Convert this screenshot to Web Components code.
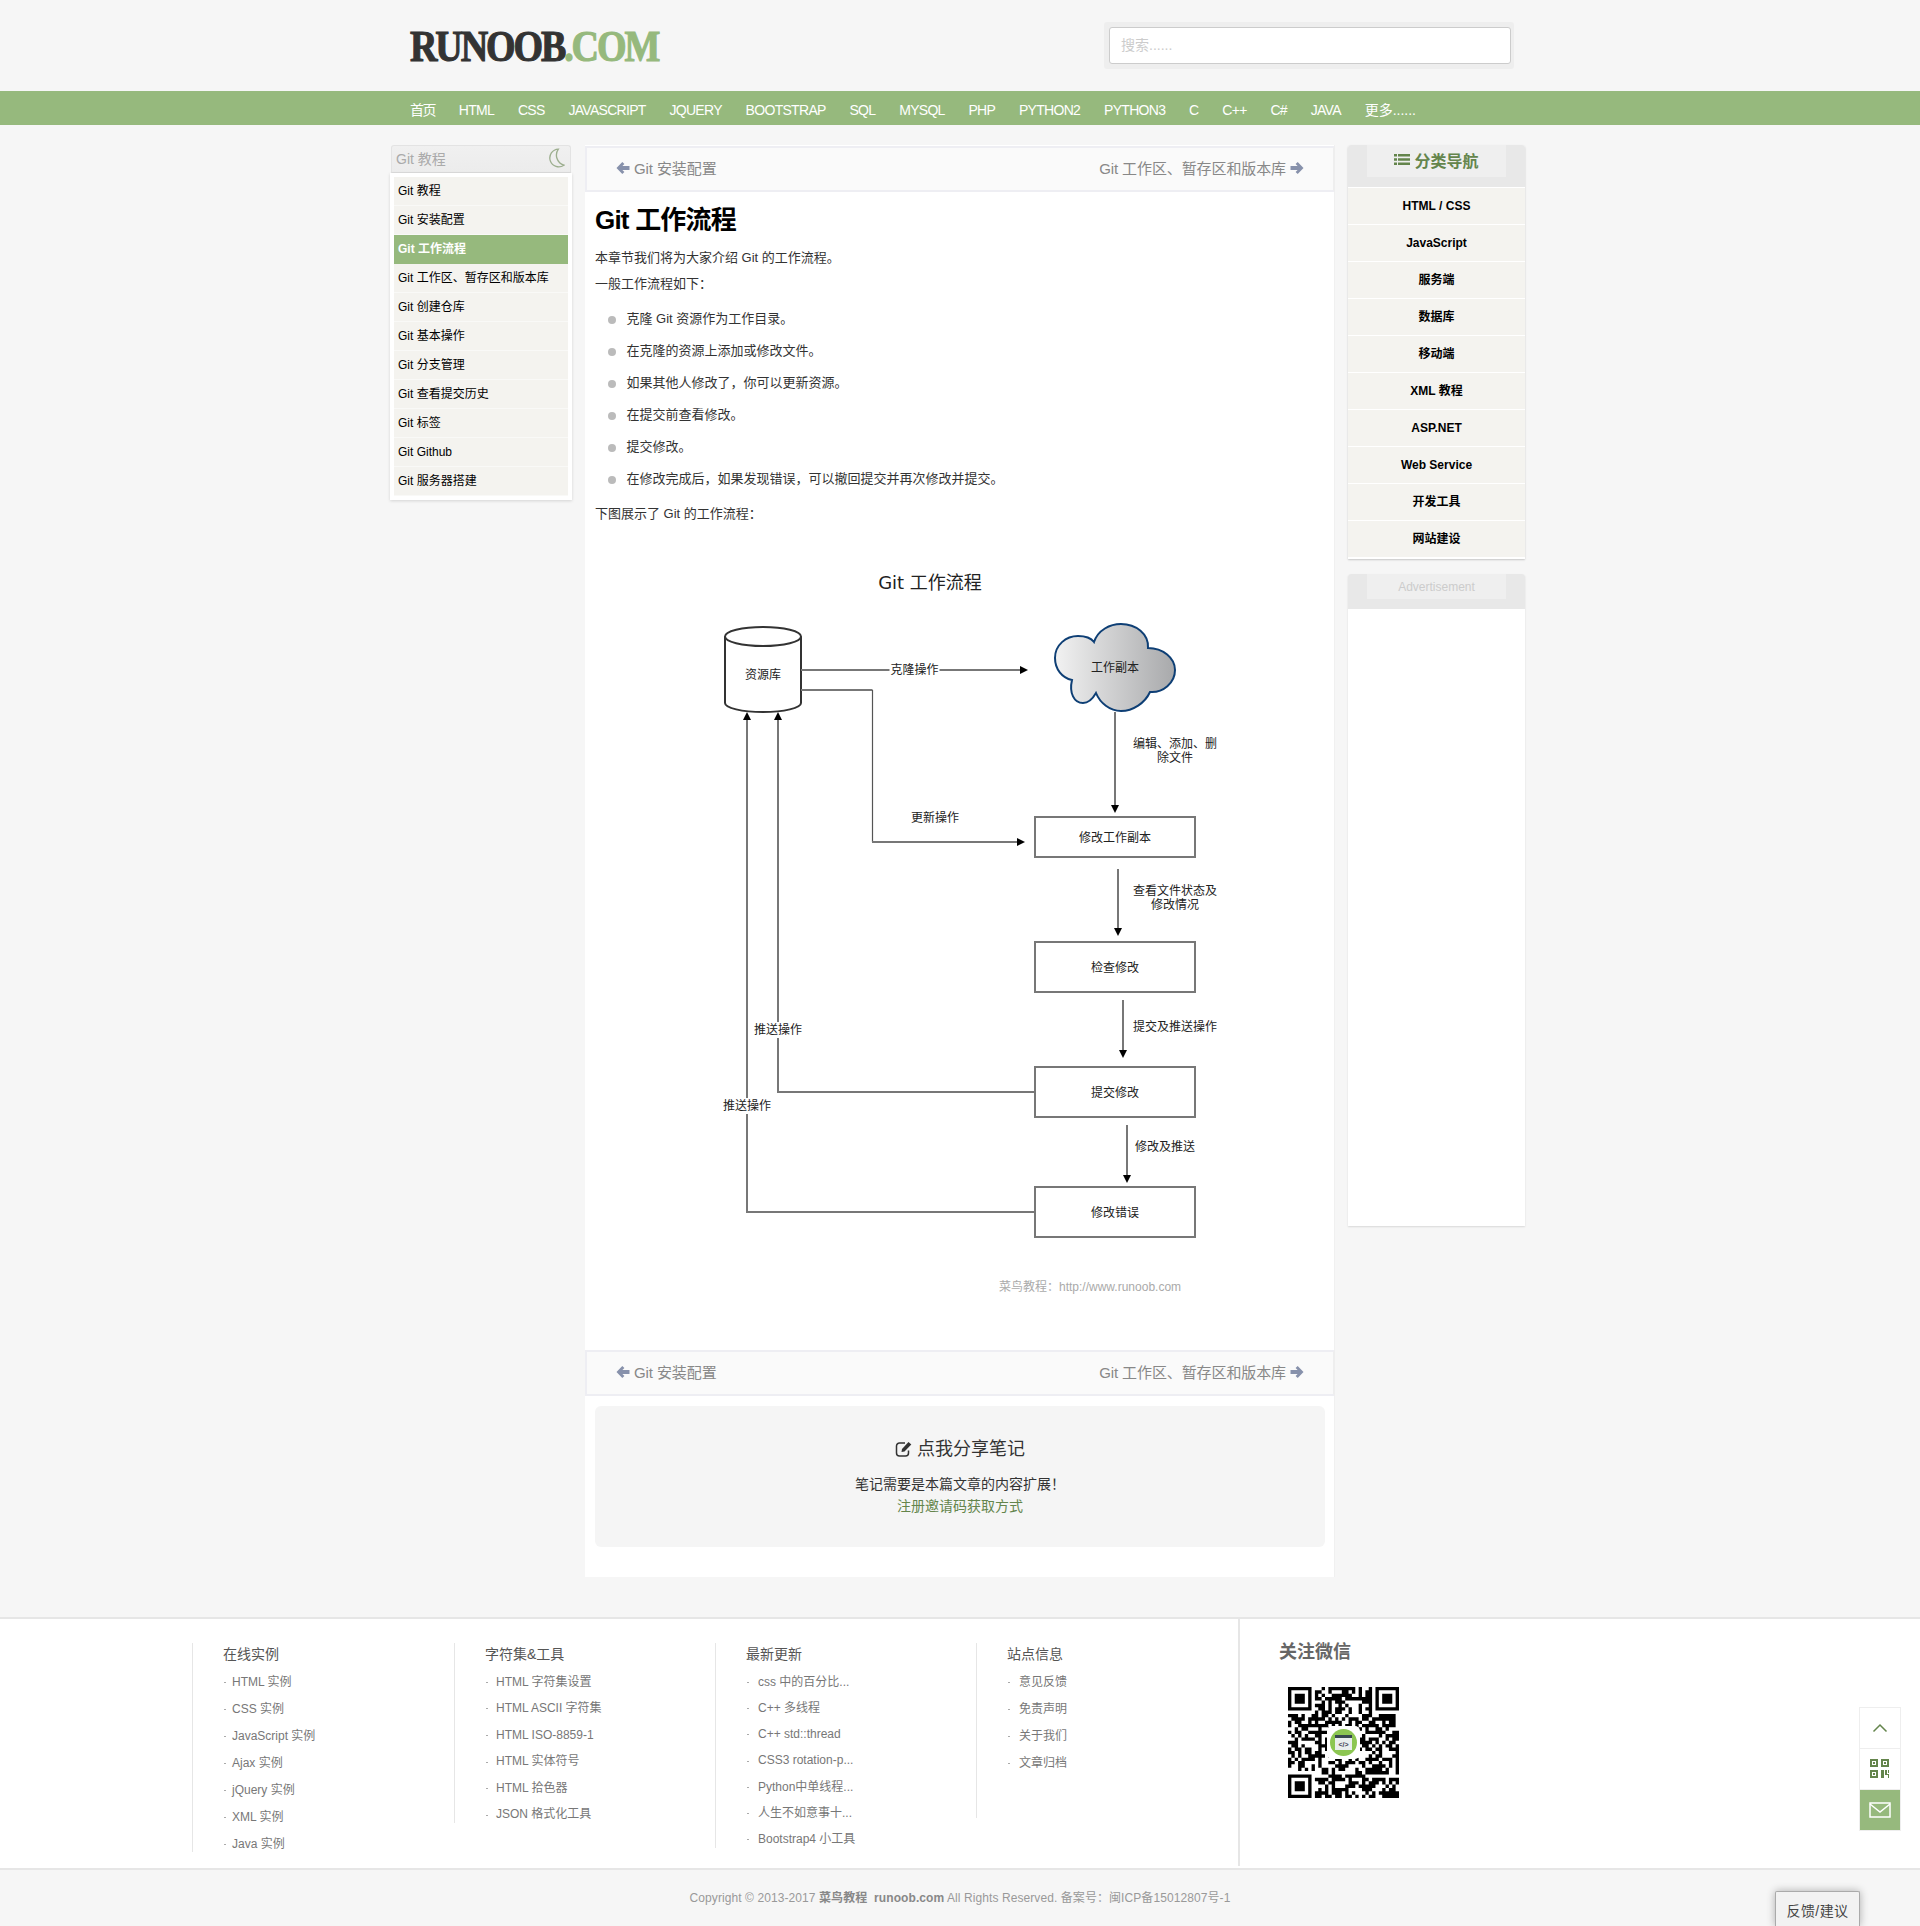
<!DOCTYPE html>
<html lang="zh">
<head>
<meta charset="utf-8">
<title>Git 工作流程 | 菜鸟教程</title>
<style>
  html,body{margin:0;padding:0}
  body{
    background:#f6f6f6;
    color:#333;
    font-family:"Liberation Sans","Noto Sans CJK SC",sans-serif;
    font-size:12px;
    height:1926px;
    overflow:hidden;
    position:relative;
  }
  .main{
    display:grid;
    grid-template-columns:182px 750px 177px;
    column-gap:13px;
    align-items:start;
    padding:20px 0 40px 390px;
  }
  .right{display:flex;flex-direction:column;gap:15px}
</style>
</head>
<body>
<site-header></site-header>
<div class="main">
  <side-menu heading="Git 教程">
    <a>Git 教程</a>
    <a>Git 安装配置</a>
    <a class="active">Git 工作流程</a>
    <a>Git 工作区、暂存区和版本库</a>
    <a>Git 创建仓库</a>
    <a>Git 基本操作</a>
    <a>Git 分支管理</a>
    <a>Git 查看提交历史</a>
    <a>Git 标签</a>
    <a>Git Github</a>
    <a>Git 服务器搭建</a>
  </side-menu>
  <tutorial-article></tutorial-article>
  <div class="right">
    <cate-nav>
      <a>HTML / CSS</a><a>JavaScript</a><a>服务端</a><a>数据库</a><a>移动端</a>
      <a>XML 教程</a><a>ASP.NET</a><a>Web Service</a><a>开发工具</a><a>网站建设</a>
    </cate-nav>
    <ad-box></ad-box>
  </div>
</div>
<site-footer>
  <footer-col heading="在线实例" width="262" line="209" row="27" indent="9">
    <a>HTML 实例</a><a>CSS 实例</a><a>JavaScript 实例</a><a>Ajax 实例</a><a>jQuery 实例</a><a>XML 实例</a><a>Java 实例</a>
  </footer-col>
  <footer-col heading="字符集&amp;工具" width="261" line="180" row="26.6" indent="11">
    <a>HTML 字符集设置</a><a>HTML ASCII 字符集</a><a>HTML ISO-8859-1</a><a>HTML 实体符号</a><a>HTML 拾色器</a><a>JSON 格式化工具</a>
  </footer-col>
  <footer-col heading="最新更新" width="261" line="205" row="26.3" indent="12">
    <a>css 中的百分比...</a><a>C++ 多线程</a><a>C++ std::thread</a><a>CSS3 rotation-p...</a><a>Python中单线程...</a><a>人生不如意事十...</a><a>Bootstrap4 小工具</a>
  </footer-col>
  <footer-col heading="站点信息" width="262" line="175" row="27" indent="12">
    <a>意见反馈</a><a>免责声明</a><a>关于我们</a><a>文章归档</a>
  </footer-col>
</site-footer>
<float-tools></float-tools>

<script>
const GREEN = '#96b97d';
const DARK_GREEN = '#64854c';

const ARROW_LEFT = '<svg viewBox="0 0 14 14" width="14" height="14"><path d="M.5 7 6.300 1 8.400 3.100 6.400 5H13.500V9H6.400L8.400 10.900 6.300 13z" fill="#8791ab"/></svg>';
const ARROW_RIGHT = '<svg viewBox="0 0 14 14" width="14" height="14"><path d="M13.500 7 7.700 1 5.600 3.100 7.600 5H.5V9H7.600L5.600 10.900 7.700 13z" fill="#8791ab"/></svg>';

class SiteHeader extends HTMLElement {
  constructor() {
    super();
    this.attachShadow({ mode: 'open' });
    const items = ['首页','HTML','CSS','JAVASCRIPT','JQUERY','BOOTSTRAP','SQL','MYSQL','PHP','PYTHON2','PYTHON3','C','C++','C#','JAVA','更多......'];
    this.shadowRoot.innerHTML = `
      <style>
        :host{display:block}
        .top{
          height:91px;
          display:flex;
          align-items:center;
          justify-content:space-between;
          padding:0 406px 0 410px;
          box-sizing:border-box;
        }
        .logo{
          font-family:"Liberation Serif",serif;
          font-weight:700;
          font-size:38px;
          letter-spacing:-2.100px;
          line-height:46px;
          color:#333;
          -webkit-text-stroke:1px currentColor;
          transform:scaleY(1.16);
          transform-origin:left center;
          margin-top:1px;
        }
        .logo span{color:${GREEN}}
        .search{
          width:410px;
          height:47px;
          box-sizing:border-box;
          padding:5px 3px 5px 5px;
          background:#eee;
          border-radius:3px;
        }
        .search div{
          height:37px;
          box-sizing:border-box;
          background:#fff;
          border:1px solid #ccc;
          border-radius:3px;
          padding-left:11px;
          font-size:14px;
          line-height:35px;
          color:#ccc;
        }
        nav{
          height:34px;
          background:${GREEN};
          display:flex;
          gap:23.800px;
          padding-left:410px;
          font-size:14px;
          line-height:38px;
          letter-spacing:-.7px;
          color:#fff;
        }
        nav .home{letter-spacing:-1.500px}
        nav .more{letter-spacing:0}
      </style>
      <div class="top">
        <div class="logo">RUNOOB<span>.COM</span></div>
        <div class="search"><div>搜索......</div></div>
      </div>
      <nav>${items.map((t) => `<span class="${t === '首页' ? 'home' : t.startsWith('更多') ? 'more' : ''}">${t}</span>`).join('')}</nav>
    `;
  }
}
customElements.define('site-header', SiteHeader);

class SideMenu extends HTMLElement {
  constructor() {
    super();
    this.attachShadow({ mode: 'open' });
    this.shadowRoot.innerHTML = `
      <style>
        :host{display:block}
        .head{
          height:28px;
          box-sizing:border-box;
          margin:0 1px;
          border:1px solid #e3e3e3;
          border-bottom-color:#ddd;
          border-radius:3px 3px 0 0;
          background:linear-gradient(#f0f0f0,#ececec);
          display:flex;
          align-items:center;
          justify-content:space-between;
          padding:0 5px 2px 4px;
          font-size:14px;
          color:#aaa;
        }
        .list{
          background:#fff;
          padding:4px 4px 4px;
          box-shadow:0 1px 3px rgba(0,0,0,.14);
          display:flex;
          flex-direction:column;
        }
        ::slotted(a){
          display:block;
          height:29px;
          box-sizing:border-box;
          padding-left:4px;
          line-height:28px;
          color:#000;
          background:#f4f3ef;
          border-bottom:1px solid #f9f9f7;
        }
        ::slotted(a.active){
          background:${GREEN};
          color:#fff;
          font-weight:700;
          border-bottom:0;
        }
      </style>
      <div class="head">
        <span>${this.getAttribute('heading')}</span>
        <svg width="20" height="20" viewBox="0 0 18 18"><path d="M12 1A8 8 0 1 0 17 15.500 9.500 9.500 0 0 1 12 1z" fill="none" stroke="#9cae8e" stroke-width="1.200"/></svg>
      </div>
      <div class="list"><slot></slot></div>
    `;
  }
}
customElements.define('side-menu', SideMenu);

class ArticlePager extends HTMLElement {
  constructor() {
    super();
    this.attachShadow({ mode: 'open' });
    this.shadowRoot.innerHTML = `
      <style>
        :host{
          display:flex;
          height:46px;
          box-sizing:border-box;
          justify-content:space-between;
          align-items:center;
          padding:0 29px 3px 29px;
          background:#fafafa;
          border:2px solid #eeeef3;
          border-right-color:#eee;
          font-size:15px;
          letter-spacing:-.1px;
          color:#888;
        }
        span{display:flex;align-items:center;gap:4px}
      </style>
      <span>${ARROW_LEFT}Git 安装配置</span>
      <span>Git 工作区、暂存区和版本库${ARROW_RIGHT}</span>
    `;
  }
}
customElements.define('article-pager', ArticlePager);

class FlowDiagram extends HTMLElement {
  constructor() {
    super();
    this.attachShadow({ mode: 'open' });
    const box = (y, h, label) => `
      <rect x="1035" y="${y}" width="160" height="${h}" fill="#fff" stroke="#777" stroke-width="2"/>
      <text x="1115" y="${y + h / 2 + 4.700}">${label}</text>`;
    const down = (x, y1, y2) => `
      <path d="M${x} ${y1}V${y2 - 7}" class="line"/>
      <path d="M${x - 4} ${y2 - 8}h8l-4 8z"/>`;
    const label = (x, y, t, w = 50) => `
      <rect x="${x - w / 2}" y="${y - 8}" width="${w}" height="16" fill="#fff"/>
      <text x="${x}" y="${y + 4}">${t}</text>`;
    this.shadowRoot.innerHTML = `
      <style>
        :host{display:block;height:820px}
        svg{display:block}
        text{
          font-size:12px;
          text-anchor:middle;
          fill:#222;
        }
        .title{font:18px "DejaVu Sans","Noto Sans CJK SC",sans-serif;fill:#222}
        .mark{fill:#aaa;text-anchor:start}
        .line{fill:none;stroke:#777;stroke-width:2}
        .thin{fill:none;stroke:#555;stroke-width:1.200}
      </style>
      <svg width="750" height="820" viewBox="585 530 750 820">
        <defs>
          <linearGradient id="cloud" x1="0" x2="1" y1="0" y2="0">
            <stop offset="0" stop-color="#f2f2f2"/>
            <stop offset="1" stop-color="#a8a9ab"/>
          </linearGradient>
        </defs>
        <text class="title" x="930" y="589">Git 工作流程</text>

        <path d="M725 636.500V703c0 5 17 9 38 9s38-4 38-9V636.500" fill="#fff" stroke="#333" stroke-width="2"/>
        <ellipse cx="763" cy="636.500" rx="38" ry="9.500" fill="#fff" stroke="#333" stroke-width="2"/>
        <text x="763" y="679">资源库</text>

        <path d="M801 670H1021" class="line"/>
        <path d="M1020 666v8l8-4z"/>
        ${label(914.500, 670, '克隆操作')}

        <path d="M801 690H872.500" class="line"/>
        <path d="M872.500 690V842" class="thin"/>
        <path d="M872 842H1017" class="line"/>
        <path d="M1017 838v8l8-4z"/>
        <text x="935" y="822">更新操作</text>

        <path d="M1094 642C1098 630 1110 624 1121 624C1136 624 1149 634 1148 648C1163 648 1175 658 1175 670C1175 683 1163 693 1150 692C1145 703 1133 711 1121 711C1110 711 1100 703 1096 693C1092 700 1088 703 1083 703C1074 703 1069 693 1072 680C1062 678 1055 669 1055 658C1055 645 1066 636 1078 636C1085 636 1091 638 1094 642Z" fill="url(#cloud)" stroke="#0e3f75" stroke-width="2"/>
        <text x="1115" y="672">工作副本</text>

        ${down(1115, 712, 813)}
        <text x="1175" y="748">编辑、添加、删</text>
        <text x="1175" y="762">除文件</text>

        ${box(817, 40, '修改工作副本')}

        ${down(1118, 869, 936)}
        <text x="1175" y="895">查看文件状态及</text>
        <text x="1175" y="909">修改情况</text>

        ${box(942, 50, '检查修改')}

        ${down(1123, 1000, 1058)}
        <text x="1175" y="1031">提交及推送操作</text>

        ${box(1067, 50, '提交修改')}

        ${down(1127, 1125, 1183)}
        <text x="1165" y="1151">修改及推送</text>

        ${box(1187, 50, '修改错误')}

        <path d="M1034 1092H778V718" class="line"/>
        <path d="M774 720h8l-4-8z"/>
        <path d="M1034 1212H747V718" class="line"/>
        <path d="M743 720h8l-4-8z"/>
        ${label(778, 1030, '推送操作')}
        ${label(747, 1106, '推送操作')}

        <text class="mark" x="999" y="1291">菜鸟教程：</text>
        <text class="mark" x="1059" y="1291">http://www.runoob.com</text>
      </svg>
    `;
  }
}
customElements.define('flow-diagram', FlowDiagram);

class NoteBox extends HTMLElement {
  constructor() {
    super();
    this.attachShadow({ mode: 'open' });
    this.shadowRoot.innerHTML = `
      <style>
        :host{
          display:block;
          height:141px;
          box-sizing:border-box;
          margin:10px 10px 0;
          padding-top:30px;
          background:#f5f5f5;
          border-radius:6px;
          text-align:center;
          font-size:14px;
          line-height:21px;
          color:#333;
        }
        h3{
          margin:0 0 12px;
          font-size:18px;
          font-weight:400;
          line-height:26px;
          display:flex;
          justify-content:center;
          align-items:center;
          gap:4px;
        }
        a{color:${DARK_GREEN};display:block;margin-top:1px}
        p{margin:0}
      </style>
      <h3>
        <svg width="18" height="18" viewBox="0 0 18 18">
          <path d="M13.500 10.500V13a3 3 0 0 1-3 3H4.500a3 3 0 0 1-3-3V6a3 3 0 0 1 3-3H10" fill="none" stroke="#333" stroke-width="1.500"/>
          <path d="M7 9l6.500-7 2.800 2.500L9.500 11.500 6.500 12z" fill="#333"/>
        </svg>
        点我分享笔记
      </h3>
      <p>笔记需要是本篇文章的内容扩展！</p>
      <a>注册邀请码获取方式</a>
    `;
  }
}
customElements.define('note-box', NoteBox);

class TutorialArticle extends HTMLElement {
  constructor() {
    super();
    this.attachShadow({ mode: 'open' });
    const steps = ['克隆 Git 资源作为工作目录。','在克隆的资源上添加或修改文件。','如果其他人修改了，你可以更新资源。','在提交前查看修改。','提交修改。','在修改完成后，如果发现错误，可以撤回提交并再次修改并提交。'];
    this.shadowRoot.innerHTML = `
      <style>
        :host{
          display:block;
          background:#fff;
          padding:1px 0 30px;
          box-sizing:border-box;
          box-shadow:-1px 0 0 #f0f0f0 inset;
        }
        .intro{
          padding:0 10px;
          font-size:13px;
          line-height:20px;
          color:#333;
        }
        h1{
          margin:8px 0 8px;
          font-size:26px;
          letter-spacing:-.8px;
          line-height:40px;
          color:#000;
        }
        p{margin:0 0 6px}
        ul{margin:15px 0 15px;padding:0 0 0 13px;list-style:none}
        li{display:flex;align-items:center;gap:10.500px;margin-bottom:12px}
        li:last-child{margin-bottom:0}
        li::before{content:"";width:8px;height:8px;border-radius:50%;background:#bbb;margin-top:2px}
      </style>
      <article-pager></article-pager>
      <div class="intro">
        <h1>Git 工作流程</h1>
        <p>本章节我们将为大家介绍 Git 的工作流程。</p>
        <p>一般工作流程如下：</p>
        <ul>${steps.map((s) => `<li>${s}</li>`).join('')}</ul>
        <p>下图展示了 Git 的工作流程：</p>
      </div>
      <flow-diagram></flow-diagram>
      <article-pager></article-pager>
      <note-box></note-box>
    `;
  }
}
customElements.define('tutorial-article', TutorialArticle);

class CateNav extends HTMLElement {
  constructor() {
    super();
    this.attachShadow({ mode: 'open' });
    this.shadowRoot.innerHTML = `
      <style>
        :host{
          display:block;
          background:#fff;
          border-radius:3px 3px 0 0;
          box-shadow:0 1px 2px rgba(0,0,0,.2);
        }
        .head{
          height:42px;
          background:#e8e8e8;
          padding:0 19px;
          border-radius:3px 3px 0 0;
        }
        .head div{
          height:32px;
          padding-bottom:2px;
          box-sizing:border-box;
          background:#efefef;
          display:flex;
          align-items:center;
          justify-content:center;
          gap:4px;
          font-size:16px;
          font-weight:700;
          color:${DARK_GREEN};
        }
        .list{padding:0 0 2px;display:flex;flex-direction:column}
        ::slotted(a){
          display:block;
          height:37px;
          box-sizing:border-box;
          border-top:1px solid #fff;
          background:#f4f3ef;
          text-align:center;
          line-height:37px;
          font-size:12px;
          font-weight:700;
          color:#000;
        }
      </style>
      <div class="head"><div>
        <svg width="16" height="14" viewBox="0 0 16 14" fill="${DARK_GREEN}">
          <path d="M0 1h3v2.500H0zM4 1h12v2.500H4zM0 5.300h3v2.500H0zM4 5.300h12v2.500H4zM0 9.600h3v2.500H0zM4 9.600h12v2.500H4z"/>
        </svg>
        分类导航
      </div></div>
      <div class="list"><slot></slot></div>
    `;
  }
}
customElements.define('cate-nav', CateNav);

class AdBox extends HTMLElement {
  constructor() {
    super();
    this.attachShadow({ mode: 'open' });
    this.shadowRoot.innerHTML = `
      <style>
        :host{
          display:block;
          height:652px;
          background:#fff;
          border-radius:3px 3px 0 0;
          box-shadow:0 1px 2px rgba(0,0,0,.12);
        }
        .head{height:35px;background:#e8e8e8;padding:0 19px;border-radius:3px 3px 0 0}
        .head div{
          height:25px;
          background:#efefef;
          text-align:center;
          line-height:27px;
          font-size:12px;
          color:#ccc;
        }
      </style>
      <div class="head"><div>Advertisement</div></div>
    `;
  }
}
customElements.define('ad-box', AdBox);

class FooterCol extends HTMLElement {
  constructor() {
    super();
    this.attachShadow({ mode: 'open' });
    const row = this.getAttribute('row');
    const indent = this.getAttribute('indent');
    this.shadowRoot.innerHTML = `
      <style>
        :host{
          display:block;
          width:${this.getAttribute('width')}px;
          height:${this.getAttribute('line')}px;
          box-sizing:border-box;
          border-left:1px solid #e6e6e6;
          padding-left:30px;
          overflow:hidden;
        }
        h4{
          margin:0;
          height:25.500px;
          font-size:14px;
          font-weight:400;
          line-height:22px;
          color:#555;
        }
        ::slotted(a){
          display:block;
          position:relative;
          height:${row}px;
          line-height:${row}px;
          padding-left:${indent}px;
          color:#777;
          font-size:12px;
        }
        ::slotted(a)::before{
          content:"";
          position:absolute;
          left:1px;
          top:50%;
          width:2px;
          height:1px;
          background:#aaa;
        }
      </style>
      <h4>${this.getAttribute('heading').replace('&', '&amp;')}</h4>
      <slot></slot>
    `;
  }
}
customElements.define('footer-col', FooterCol);

class WechatCode extends HTMLElement {
  constructor() {
    super();
    this.attachShadow({ mode: 'open' });
    const n = 33;
    const inFinder = (x, y) => (x < 8 && y < 8) || (x > n - 9 && y < 8) || (x < 8 && y > n - 9);
    let seed = 20170315;
    const next = () => {
      seed = (seed * 1664525 + 1013904223) >>> 0;
      return (seed >>> 16) / 65536;
    };
    let d = '';
    for (let y = 0; y < n; y++) {
      for (let x = 0; x < n; x++) {
        const on = next() < 0.56;
        if (!inFinder(x, y) && on) d += `M${x} ${y}h1v1h-1z`;
      }
    }
    const finder = (x, y) => `M${x} ${y}h7v7h-7zM${x + 1} ${y + 1}v5h5v-5zM${x + 2} ${y + 2}h3v3h-3z`;
    d += finder(0, 0) + finder(n - 7, 0) + finder(0, n - 7);
    this.shadowRoot.innerHTML = `
      <style>
        :host{display:block;width:111px;height:111px;position:relative}
        svg{display:block}
        text{font:700 7px "Liberation Sans",sans-serif;text-anchor:middle;fill:#445}
      </style>
      <svg width="111" height="111" viewBox="0 0 111 111">
        <g transform="scale(3.3636)"><path d="${d}" fill="#000" fill-rule="evenodd"/></g>
        <rect x="39" y="39" width="33" height="33" rx="5" fill="#fff"/>
        <circle cx="55.500" cy="55.500" r="13.500" fill="#8cc652"/>
        <rect x="47" y="48" width="17" height="15" fill="#e9eeee"/>
        <rect x="47" y="48" width="17" height="3" fill="#37474f"/>
        <text x="55.500" y="60">&lt;/&gt;</text>
      </svg>
    `;
  }
}
customElements.define('wechat-code', WechatCode);

class SiteFooter extends HTMLElement {
  constructor() {
    super();
    this.attachShadow({ mode: 'open' });
    this.shadowRoot.innerHTML = `
      <style>
        :host{display:block}
        .wrap{
          height:253px;
          box-sizing:border-box;
          background:#fff;
          border-top:2px solid #e6e6e6;
          border-bottom:2px solid #e6e6e6;
          display:flex;
          padding-left:192px;
        }
        .cols{display:flex;align-items:flex-start;padding-top:24px}
        .follow{
          width:300px;
          height:247px;
          box-sizing:border-box;
          border-left:2px solid #e6e6e6;
          padding:21px 0 0 39px;
        }
        h3{
          margin:0 0 22px;
          font-size:18px;
          line-height:25px;
          color:#666;
        }
        wechat-code{margin-left:9px}
        .copy{
          height:56px;
          text-align:center;
          font-size:12px;
          letter-spacing:.08px;
          line-height:56px;
          color:#999;
        }
        .copy b{color:#888}
      </style>
      <div class="wrap">
        <div class="cols"><slot></slot></div>
        <div class="follow">
          <h3>关注微信</h3>
          <wechat-code></wechat-code>
        </div>
      </div>
      <div class="copy">Copyright © 2013-2017 <b>菜鸟教程 &nbsp;runoob.com</b> All Rights Reserved. 备案号：闽ICP备15012807号-1</div>
    `;
  }
}
customElements.define('site-footer', SiteFooter);

class FloatTools extends HTMLElement {
  constructor() {
    super();
    this.attachShadow({ mode: 'open' });
    this.shadowRoot.innerHTML = `
      <style>
        :host{display:block}
        .tools{
          position:absolute;
          left:1859px;
          top:1707px;
          width:42px;
          box-sizing:border-box;
          background:#fff;
          border:1px solid #eee;
        }
        .tools div{
          height:40px;
          display:flex;
          align-items:center;
          justify-content:center;
          border-bottom:1px solid #eee;
        }
        .tools div:last-child{background:${GREEN};border-bottom:0}
        .feedback{
          position:absolute;
          left:1775px;
          top:1891px;
          width:85px;
          height:35px;
          box-sizing:border-box;
          background:#f2f2f2;
          border:1px solid #aaa;
          border-bottom:0;
          border-radius:2px 2px 0 0;
          box-shadow:0 0 8px rgba(0,0,0,.3);
          text-align:center;
          font-size:14px;
          letter-spacing:.4px;
          line-height:38px;
          color:#444;
        }
      </style>
      <div class="tools">
        <div><svg width="16" height="10" viewBox="0 0 16 10"><path d="M1.500 8.500 8 2l6.500 6.500" fill="none" stroke="${DARK_GREEN}" stroke-width="1.500"/></svg></div>
        <div><svg width="20" height="20" viewBox="0 0 20 20" fill="${DARK_GREEN}" fill-rule="evenodd">
          <path d="M0 0h8v8H0zM2 2v4h4V2zM3 3h2v2H3zM11 0h8v8h-8zM13 2v4h4V2zM14 3h2v2h-2zM0 11h8v8H0zM2 13v4h4v-4zM3 14h2v2H3zM11 11h3v8h-3zM15 11h2v4h2v4h-1v-3h-3zM18 11h1v3h-1z"/>
        </svg></div>
        <div><svg width="22" height="16" viewBox="0 0 22 16"><rect x="1" y="1" width="20" height="14" fill="none" stroke="#fff" stroke-width="1.500"/><path d="M1 2l10 8 10-8" fill="none" stroke="#fff" stroke-width="1.500"/></svg></div>
      </div>
      <div class="feedback">反馈/建议</div>
    `;
  }
}
customElements.define('float-tools', FloatTools);
</script>
</body>
</html>
